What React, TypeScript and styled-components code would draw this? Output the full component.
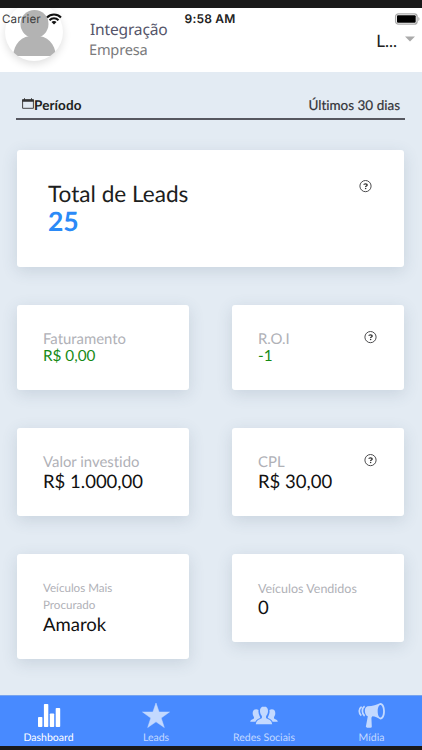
import React from "react";
import styled, { createGlobalStyle } from "styled-components";

const GlobalStyle = createGlobalStyle`
  * { box-sizing: border-box; }
  body {
    margin: 0;
    background: #1a1a1a;
    font-family: Lato, "Open Sans", sans-serif;
    font-variant-ligatures: none;
    text-rendering: geometricPrecision;
  }
`;

const Screen = styled.div`
  width: 422px;
  height: 750px;
  display: flex;
  flex-direction: column;
  padding: 8px 0 4px;
  background: #1a1a1a;
  overflow: hidden;
`;

const Header = styled.header`
  position: relative;
  flex: none;
  height: 64px;
  display: flex;
  align-items: flex-start;
  background: #fff;
`;

const StatusBar = styled.div`
  position: absolute;
  inset: 0 0 auto 0;
  height: 20px;
  padding: 0 2px 0 2px;
  display: grid;
  grid-template-columns: 1fr auto 1fr;
  align-items: center;
  font-family: Inter, sans-serif;
  line-height: 20px;
  color: #222;
`;

const Carrier = styled.div`
  display: flex;
  align-items: center;
  gap: 5px;
  padding-top: 1px;
  color: #3c3c3e;
  font-size: 11.6px;
  letter-spacing: 0.1px;
`;

const Clock = styled.div`
  font-weight: 600;
  font-size: 12px;
  letter-spacing: 0.2px;
  padding-top: 1px;
  margin-right: 2px;
`;

const Battery = styled.svg`
  justify-self: end;
`;

const Avatar = styled.div`
  flex: none;
  width: 58px;
  height: 58px;
  margin: -5px 0 0 5px;
  border-radius: 50%;
  background: #fff;
  overflow: hidden;
  box-shadow: 0 3px 8px rgba(0, 0, 0, 0.13);
  clip-path: inset(5px -12px -12px -12px);
`;

const Account = styled.div`
  flex: 1;
  padding: 11px 0 0 26px;
  font-family: "Noto Sans", sans-serif;
`;

const AccountName = styled.div`
  margin-left: 1px;
  font-size: 15.6px;
  line-height: 20px;
  letter-spacing: -0.2px;
  color: #55556a;
`;

const AccountKind = styled.div`
  font-size: 14.6px;
  line-height: 22px;
  letter-spacing: -0.2px;
  color: #7b7b7d;
`;

const Picker = styled.div`
  display: flex;
  align-items: center;
  gap: 8px;
  margin: 23px 7px 0 0;
  font-size: 17px;
  line-height: 20px;
  color: #222;
`;

const Caret = styled.svg`
  margin-top: -5px;
`;

const Content = styled.main`
  flex: 1;
  min-height: 0;
  padding: 22px 17px 0 16px;
  background: #e3ebf3;
`;

const Period = styled.div`
  display: flex;
  align-items: center;
  height: 26px;
  padding: 0 5px 2px 6px;
  border-bottom: 2px solid #56575f;
  font-size: 13.5px;
  line-height: 20px;
`;

const PeriodLabel = styled.strong`
  color: #1d1e20;
  letter-spacing: 0.1px;
`;

const PeriodValue = styled.span`
  margin-left: auto;
  color: #333439;
  -webkit-text-stroke: 0.2px #333439;
`;

const CalendarIcon = styled.svg`
  margin: -3px 0 0 0;
`;

const Cards = styled.div`
  display: grid;
  grid-template-columns: 172px 172px;
  justify-content: space-between;
  align-items: start;
  row-gap: 38px;
  margin: 29.5px 1px 0 1px;
`;

const Card = styled.section<{ $height: number; $wide?: boolean }>`
  grid-column: ${(p) => (p.$wide ? "1 / -1" : "auto")};
  height: ${(p) => p.$height}px;
  display: flex;
  justify-content: space-between;
  align-items: flex-start;
  padding: ${(p) => (p.$wide ? "30px 32px 0 31px" : "26px 27px 0 26px")};
  background: #fff;
  border-radius: 3px;
  box-shadow: 0 4px 16px rgba(60, 85, 115, 0.16);
`;

const Label = styled.div<{ $size?: number; $lead?: boolean }>`
  font-size: ${(p) => (p.$lead ? 22.6 : p.$size ?? 14.9)}px;
  line-height: ${(p) => (p.$lead ? 27 : 17)}px;
  color: ${(p) => (p.$lead ? "#1d1e20" : "#b0b1b7")};
`;

const Value = styled.div<{ $tone?: "lead" | "gain" }>`
  font-size: ${(p) => (p.$tone === "lead" ? 26.5 : p.$tone === "gain" ? 15.3 : 18.5)}px;
  line-height: ${(p) => (p.$tone === "lead" ? 29 : p.$tone === "gain" ? 16 : 20)}px;
  font-weight: ${(p) => (p.$tone === "lead" ? 700 : 400)};
  color: ${(p) => (p.$tone === "lead" ? "#2b8af7" : p.$tone === "gain" ? "#168a16" : "#111")};
`;

const HelpMark = styled.svg`
  flex: none;
`;

const TabBar = styled.nav`
  flex: none;
  height: 51px;
  display: grid;
  grid-template-columns: 97px 118px 98px 117px;
  margin-right: -8px;
  background: #488aff;
  border-top: 1px solid #77a4ef;
`;

const Tab = styled.div<{ $active?: boolean }>`
  display: flex;
  flex-direction: column;
  align-items: center;
  padding-top: 6px;
  color: ${(p) => (p.$active ? "#fff" : "#c3d9ff")};
  font-size: 10.5px;
  line-height: 13px;
  white-space: nowrap;
`;

const TabIcon = styled.svg`
  margin-bottom: 3px;
`;

const Help = () => (
  <HelpMark width="13" height="13" viewBox="0 0 13 13" fill="none">
    <circle cx="6.5" cy="6.1" r="5.6" stroke="#4c4c4e" strokeWidth="1" />
    <path d="M4.9 4.8C5 3.6 8.2 3.5 8.2 5c0 1-1.6 1.1-1.6 2.1" stroke="#333" strokeWidth="1.35" />
    <circle cx="6.6" cy="8.6" r=".75" fill="#333" />
  </HelpMark>
);

const metrics = [
  { label: "Faturamento", value: "R$ 0,00", height: 85, gain: true },
  { label: "R.O.I", value: "-1", height: 85, gain: true, help: true },
  { label: "Valor investido", value: "R$ 1.000,00", height: 88 },
  { label: "CPL", value: "R$ 30,00", height: 88, help: true },
  { label: "Veículos Mais Procurado", value: "Amarok", height: 105, size: 11.6 },
  { label: "Veículos Vendidos", value: "0", height: 88, size: 12.5 },
];

const tabs = [
  {
    label: "Dashboard",
    icon: (
      <g>
        <rect x="3" y="15" width="4.4" height="10" rx=".8" />
        <rect x="8.9" y="2" width="4.4" height="23" rx=".8" />
        <rect x="14.8" y="11.5" width="4.4" height="13.5" rx=".8" />
        <rect x="20.7" y="6" width="4.5" height="19" rx=".8" />
      </g>
    ),
  },
  {
    label: "Leads",
    icon: <path d="M14 1 17.1 10H27.5L19.2 16 22.3 25.5 14 19.8 5.7 25.5 8.8 16 .5 10H10.9Z" strokeLinejoin="round" stroke="currentColor" strokeWidth=".5" />,
  },
  {
    label: "Redes Sociais",
    icon: (
      <g>
        <path d="M14 4.5c-3 0-4.3 2.1-4 5 .2 2.2 1 3.4 1.8 4.4.4 1 .2 2.2-.6 2.7-1.7 1-4.8 1.2-5.4 5.7h16.4c-.6-4.5-3.7-4.7-5.4-5.7-.8-.5-1-1.7-.6-2.7.8-1 1.6-2.2 1.8-4.4.3-2.9-1-5-4-5Z" />
        <path d="M8.6 8C5.4 6.3 2.4 8 2.7 11.5c.1 1.7.7 2.6 1.2 3.4.5 1.3-.3 2-1.3 2.3C1 17.7.4 18.4.2 19.8h5.2c.8-2.2 2.6-2.9 4.3-3.6.8-.4.4-1.3 0-2C8.6 12 8.1 10 8.6 8Z" />
        <path d="M19.4 8c3.2-1.7 6.2 0 5.9 3.5-.1 1.7-.7 2.6-1.2 3.4-.5 1.3.3 2 1.3 2.3 1.6.5 2.2 1.2 2.4 2.6h-5.2c-.8-2.2-2.6-2.9-4.3-3.6-.8-.4-.4-1.3 0-2 1.1-2.2 1.6-4.2 1.1-6.2Z" />
      </g>
    ),
  },
  {
    label: "Mídia",
    icon: (
      <g>
        <path fillRule="evenodd" d="M22.4 1c3 0 4.5 3.8 4.5 8.3s-1.5 8.2-4.5 8.2c-2.7-1.7-5.3-3-8-3.2l-1 1.5.4 8.7c0 .8-.4 1.2-1.2 1.2H9c-.8 0-1.2-.4-1.1-1.2l1.9-10.2C6.4 13.3 5.6 5.2 9.5 4.2 15 4.1 18.5 3 22.4 1Zm0 1.9c-1.5 0-2.7 2.6-2.7 6.4s1.2 6.3 2.7 6.3 2.7-2.5 2.7-6.3-1.2-6.4-2.7-6.4Z" />
        <path d="M6.6 4.3C3.5 6.3 3.7 11.5 6.6 14M3.6 4.7C.5 6.5.6 11.5 3.3 13.6" fill="none" stroke="currentColor" strokeWidth="1.7" />
      </g>
    ),
  },
];

export default function App() {
  return (
    <>
      <GlobalStyle />
      <Screen>
        <Header>
          <Avatar>
            <svg width="58" height="58" viewBox="0 0 58 58">
              <circle cx="29.5" cy="21" r="14" fill="#b3b3b3" />
              <path d="M8 53C9 41 16 32.5 29.5 32.5S50 41 51 53Z" fill="#b3b3b3" />
            </svg>
          </Avatar>
          <Account>
            <AccountName>Integração</AccountName>
            <AccountKind>Empresa</AccountKind>
          </Account>
          <Picker>
            L...
            <Caret width="10" height="6" viewBox="0 0 10 6">
              <path d="M0 .5h10L5 5.5Z" fill="#aaa" />
            </Caret>
          </Picker>
          <StatusBar>
            <Carrier>
              Carrier
              <svg width="16" height="12" viewBox="0 0 16 12" fill="none" stroke="#111" strokeWidth="2">
                <path d="M1 4.5C5 .5 11 .5 15 4.5M3.5 7.2c2.5-2.5 6.5-2.5 9 0" />
                <path d="M8 11.5 5.5 9c1.2-1.3 3.8-1.3 5 0Z" fill="#111" stroke="none" />
              </svg>
            </Carrier>
            <Clock>9:58 AM</Clock>
            <Battery width="26" height="12" viewBox="0 0 26 12">
              <rect x="1.6" y=".8" width="21.5" height="10.4" rx="2.8" fill="#fff" stroke="#aaa" strokeWidth="1.3" />
              <rect x="3" y="2.2" width="18.7" height="7.6" rx="1" fill="#000" />
              <path d="M24.3 4c1.6.5 1.6 3.5 0 4Z" fill="#aaa" />
            </Battery>
          </StatusBar>
        </Header>
        <Content>
          <Period>
            <CalendarIcon width="12" height="11" viewBox="0 0 12 11">
              <path d="M.6 2h10.8v8.3H.6Z" fill="none" stroke="#444" />
              <path d="M.2 1.3h11.6v2.4H.2ZM2 .2h1v2H2ZM9 .2h1v2H9Z" fill="#333" />
            </CalendarIcon>
            <PeriodLabel>Período</PeriodLabel>
            <PeriodValue>Últimos 30 dias</PeriodValue>
          </Period>
          <Cards>
            <Card $wide $height={117}>
              <div>
                <Label $lead>Total de Leads</Label>
                <Value $tone="lead">25</Value>
              </div>
              <Help />
            </Card>
            {metrics.map((m) => (
              <Card key={m.label} $height={m.height}>
                <div>
                  <Label $size={m.size}>{m.label}</Label>
                  <Value $tone={m.gain ? "gain" : undefined}>{m.value}</Value>
                </div>
                {m.help && <Help />}
              </Card>
            ))}
          </Cards>
        </Content>
        <TabBar>
          {tabs.map((t, i) => (
            <Tab key={t.label} $active={i === 0}>
              <TabIcon width="28" height="27" viewBox="0 0 28 27" fill="currentColor">
                {t.icon}
              </TabIcon>
              {t.label}
            </Tab>
          ))}
        </TabBar>
      </Screen>
    </>
  );
}
